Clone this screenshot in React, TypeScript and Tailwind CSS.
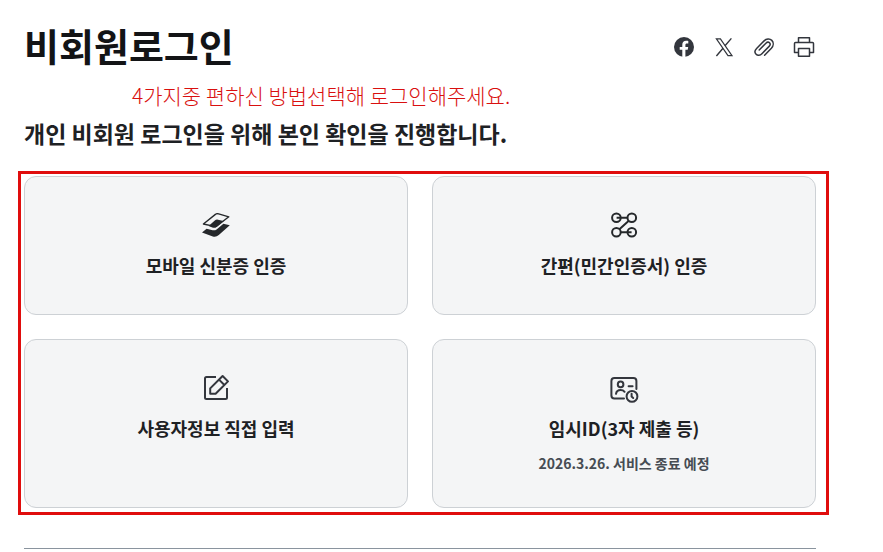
import type { ReactNode } from "react";

interface LoginMethod {
  title: string;
  note?: string;
  icon: ReactNode;
}

const MobileIdIcon = () => (
  <svg viewBox="0 0 32 32" className="size-8" aria-hidden="true">
    <path
      d="M15.4 5.4Q16.4 4.4 17.8 4.7L28.8 7.8L17.2 16.8Q16 17.8 14.5 17.4L3.4 15Z"
      fill="none"
      stroke="#25282b"
      strokeWidth="1.4"
      strokeLinejoin="round"
    />
    <path d="M8.6 17L14.8 11.6Q16.2 10.3 18 10.7L23.6 12L16.2 18.2Q14.8 19.2 13 18.7Z" fill="#25282b" />
    <path d="M2 23.6L6.6 19.8L12.6 21.2Q14.8 21.7 16.6 20.4L23.4 14.8L29.8 16.2L18.8 26Q16 28.4 12.8 27.4Z" fill="#25282b" />
  </svg>
);

const SimpleAuthIcon = () => (
  <svg viewBox="0 0 32 32" className="size-8" fill="none" stroke="#25282b" strokeWidth="2" aria-hidden="true">
    <circle cx="8.4" cy="8.8" r="4.3" />
    <circle cx="23.8" cy="8.8" r="4.3" />
    <circle cx="8.4" cy="23.2" r="4.3" />
    <circle cx="23.8" cy="23.2" r="4.3" />
    <path d="M8.6 8.8H19.6M20.8 11.8L11.4 20.2M12.6 23.2H23.6" />
  </svg>
);

const EditIcon = () => (
  <svg viewBox="0 0 32 32" className="size-8" fill="none" stroke="#33363d" strokeWidth="2" strokeLinejoin="round" aria-hidden="true">
    <path d="M16 5H6.5Q5 5 5 6.5V25.5Q5 27 6.5 27H25.5Q27 27 27 25.5V16" />
    <path d="M10.2 21.8V16.4L22.6 4L28 9.4L15.6 21.8ZM19 7.6L24.4 13" />
  </svg>
);

const TemporaryIdIcon = () => (
  <svg viewBox="0 0 32 32" className="size-8" fill="none" stroke="#33363d" strokeWidth="2" strokeLinecap="round" aria-hidden="true">
    <path d="M16 26.4H6.4Q3.4 26.4 3.4 23.4V9Q3.4 6 6.4 6H25.4Q28.4 6 28.4 9V17" />
    <circle cx="12.6" cy="12.4" r="2.8" />
    <path d="M8 21.8Q8.6 18 12.6 18Q15.2 18 16.6 19.8M20.6 14.2H24.6" />
    <circle cx="24" cy="24.4" r="5.4" />
    <path d="M23.6 21.8V24.6L25.2 26" />
  </svg>
);

const FacebookIcon = () => (
  <svg viewBox="0 0 24 24" className="size-6" aria-hidden="true">
    <circle cx="12" cy="12" r="10" fill="#33363d" />
    <path d="M10.3 22V14.8H7.7V11.9H10.3V9.7C10.3 7.1 11.8 5.7 14.1 5.7C15.2 5.7 16.3 5.9 16.3 5.9V8.4H15C13.7 8.4 13.4 9.1 13.4 10V11.9H16.2L15.7 14.8H13.4V22Z" fill="#fff" />
  </svg>
);

const XIcon = () => (
  <svg viewBox="0 0 24 24" className="size-6" fill="none" stroke="#33363d" aria-hidden="true">
    <path d="M4.4 3.8H8.4L20 20.6H16Z" strokeWidth="1.2" />
    <path d="M19.4 3.4L13 10.8M11 13.2L4.4 21" strokeWidth="1.4" />
  </svg>
);

const ClipIcon = () => (
  <svg viewBox="0 0 24 24" className="size-6" fill="none" stroke="#33363d" strokeWidth="1.5" strokeLinecap="round" aria-hidden="true">
    <path d="M12.6 20.2L19.4 13.2C21.6 10.8 21.8 7.4 19.8 5.4C17.7 3.3 14.3 3.7 12.1 5.9L4.6 13.4C2.8 15.3 2.6 17.8 4.1 19.3C5.6 20.8 8.1 20.5 9.9 18.7L17.1 11.4C18.3 10.2 18.4 8.7 17.5 7.8C16.6 6.9 15.1 7 13.9 8.2L7.2 15" />
  </svg>
);

const PrintIcon = () => (
  <svg viewBox="0 0 24 24" className="size-6" fill="none" stroke="#33363d" strokeWidth="1.5" strokeLinejoin="round" aria-hidden="true">
    <path d="M6.5 7.5V2.7H17.5V7.5" />
    <path d="M6.5 17.5H2.5V8.5Q2.5 7.5 3.5 7.5H20.5Q21.5 7.5 21.5 8.5V17.5H17.5" />
    <path d="M6.5 13.5H17.5V21.3H6.5Z" />
  </svg>
);

const shareItems = [
  { label: "페이스북 공유", icon: <FacebookIcon /> },
  { label: "X 공유", icon: <XIcon /> },
  { label: "주소 복사", icon: <ClipIcon /> },
  { label: "인쇄", icon: <PrintIcon /> },
];

const methods: LoginMethod[] = [
  { title: "모바일 신분증 인증", icon: <MobileIdIcon /> },
  { title: "간편(민간인증서) 인증", icon: <SimpleAuthIcon /> },
  { title: "사용자정보 직접 입력", icon: <EditIcon /> },
  { title: "임시ID(3자 제출 등)", note: "2026.3.26. 서비스 종료 예정", icon: <TemporaryIdIcon /> },
];

const MethodCard = ({ title, note, icon }: LoginMethod) => (
  <button
    type="button"
    className="flex flex-col items-center justify-start rounded-xl border border-[#cdd1d5] bg-[#f4f5f6] px-4 pt-8 pb-8"
  >
    {icon}
    <span className="mt-2 text-lg leading-[33px] font-bold text-[#1e2124]">{title}</span>
    {note && <span className="mt-1.5 text-sm leading-6 font-bold text-[#464c53]">{note}</span>}
  </button>
);

export default function App() {
  return (
    <main className="min-h-screen bg-white pt-5 pr-[54px] pl-[18px] font-['Noto_Sans_CJK_KR',sans-serif]">
      <header className="flex items-center justify-between pr-[13px] pl-1.5">
        <h1 className="pb-1 text-[38px] leading-[50px] font-bold text-[#131416]">비회원로그인</h1>
        <div className="flex gap-4">
          {shareItems.map((item) => (
            <button key={item.label} type="button" aria-label={item.label}>
              {item.icon}
            </button>
          ))}
        </div>
      </header>

      <p className="mt-[5px] pl-[114px] text-[21px] leading-8 font-light text-[#d9100f]">
        4가지중 편하신 방법선택해 로그인해주세요.
      </p>
      <h2 className="mt-1 pl-1.5 text-[23px] leading-9 font-bold text-[#1e2124]">
        개인 비회원 로그인을 위해 본인 확인을 진행합니다.
      </h2>

      <section className="mt-5 grid grid-cols-2 gap-6 border-3 border-[#e00d0d] pt-0.5 pr-2.5 pb-1 pl-[3px]">
        {methods.map((method) => (
          <MethodCard key={method.title} {...method} />
        ))}
      </section>

      <hr className="mt-[33px] mr-[13px] ml-1.5 border-[#8a949e]" />
    </main>
  );
}
